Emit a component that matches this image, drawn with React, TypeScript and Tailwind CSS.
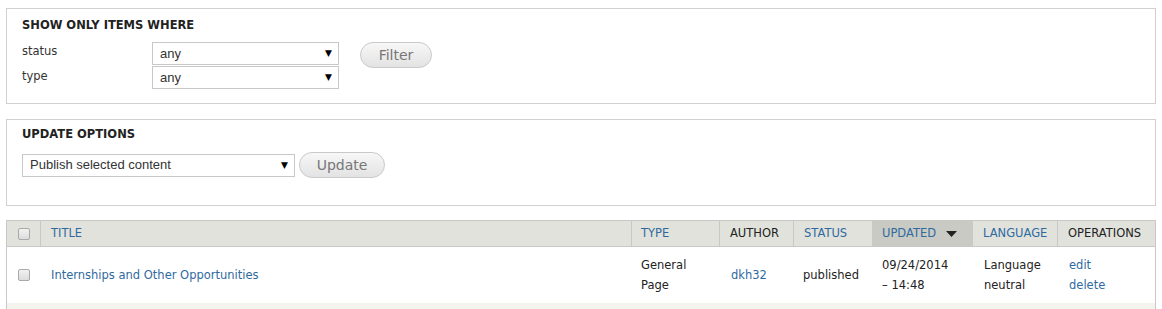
import React from "react";

const Arrow = () => (
  <span className="text-[9px] leading-none text-black">▼</span>
);

const FakeSelect = ({ value, width }: { value: string; width: string }) => (
  <div
    className={`flex h-[23px] items-center justify-between border border-[#c8c8c8] bg-white pl-[7px] pr-[6px] ${width}`}
  >
    <span className="text-[13px] text-[#333]" style={{ fontFamily: "'Liberation Sans', Arial, sans-serif" }}>
      {value}
    </span>
    <Arrow />
  </div>
);

const PillButton = ({ label, width }: { label: string; width: string }) => (
  <button
    className={`flex h-[26px] items-center justify-center rounded-full border border-[#c9c9c9] bg-gradient-to-b from-[#f7f7f7] to-[#e3e3e3] text-[14px] text-[#777] ${width}`}
  >
    {label}
  </button>
);

const Checkbox = () => (
  <span className="block h-[12px] w-[12px] rounded-[2px] border border-[#a9a9a9] bg-gradient-to-b from-[#f2f2f2] to-[#dcdcdc]" />
);

export default function App() {
  const link = "text-[#2f6a9f]";
  return (
    <div
      className="h-[309px] w-[1162px] overflow-hidden bg-white px-[6px] pt-[8px] text-[11.5px] text-[#333]"
      style={{ fontFamily: "'DejaVu Sans', Verdana, sans-serif" }}
    >
      {/* filter fieldset */}
      <div className="h-[96px] border border-[#d0d0d0] pl-[15px] pt-[8px]">
        <div className="text-[11.5px] font-bold leading-[16px] text-[#222]">SHOW ONLY ITEMS WHERE</div>
        <div className="mt-[9px] flex">
          <div className="w-[130px]">
            <div className="h-[24px] leading-[18px]">status</div>
            <div className="h-[23px] leading-[20px]">type</div>
          </div>
          <div className="flex flex-col gap-[1px]">
            <FakeSelect value="any" width="w-[187px]" />
            <FakeSelect value="any" width="w-[187px]" />
          </div>
          <div className="ml-[21px]">
            <PillButton label="Filter" width="w-[72px]" />
          </div>
        </div>
      </div>

      {/* update options */}
      <div className="mt-[15px] h-[87px] border border-[#d0d0d0] pl-[15px] pt-[6px]">
        <div className="text-[11.5px] font-bold leading-[16px] text-[#222]">UPDATE OPTIONS</div>
        <div className="mt-[10px] flex items-center gap-[4px]">
          <FakeSelect value="Publish selected content" width="w-[273px]" />
          <PillButton label="Update" width="w-[86px]" />
        </div>
      </div>

      {/* table */}
      <div className="mt-[14px] border-x border-t border-[#c8c8c8]">
        <div className="flex h-[26px] border-b border-[#c8c8c8] bg-[#e1e2dc]">
          <div className="flex w-[34px] items-center justify-center border-r border-[#c8c8c8]">
            <Checkbox />
          </div>
          <div className={`flex w-[591px] items-center border-r border-[#c8c8c8] pl-[10px] ${link}`}>TITLE</div>
          <div className={`flex w-[88px] items-center border-r border-[#c8c8c8] pl-[9px] ${link}`}>TYPE</div>
          <div className="flex w-[74px] items-center border-r border-[#c8c8c8] pl-[10px] text-[#222]">AUTHOR</div>
          <div className={`flex w-[78px] items-center pl-[10px] ${link}`}>STATUS</div>
          <div className={`flex w-[101px] items-center gap-[10px] bg-[#c9cac4] pl-[10px] ${link}`}>
            UPDATED
            <svg width="11" height="6" viewBox="0 0 11 6">
              <path d="M0 0H11L5.5 6Z" fill="#222" />
            </svg>
          </div>
          <div className={`flex w-[85px] items-center border-r border-[#c8c8c8] pl-[10px] ${link}`}>LANGUAGE</div>
          <div className="flex flex-1 items-center pl-[10px] text-[#222]">OPERATIONS</div>
        </div>
        <div className="flex h-[56px] items-center bg-white leading-[20px]">
          <div className="flex w-[34px] justify-center">
            <Checkbox />
          </div>
          <div className={`w-[591px] pl-[10px] ${link}`}>Internships and Other Opportunities</div>
          <div className="w-[88px] pl-[9px] text-[#222]">
            General
            <br />
            Page
          </div>
          <div className={`w-[74px] pl-[11px] ${link}`}>dkh32</div>
          <div className="w-[78px] pl-[9px] text-[#222]">published</div>
          <div className="w-[101px] pl-[10px] text-[#222]">
            09/24/2014
            <br />– 14:48
          </div>
          <div className="w-[85px] pl-[11px] text-[#222]">
            Language
            <br />
            neutral
          </div>
          <div className={`flex-1 pl-[11px] ${link}`}>
            edit
            <br />
            delete
          </div>
        </div>
        <div className="h-[10px] bg-[#f3f4ee]" />
      </div>
    </div>
  );
}
